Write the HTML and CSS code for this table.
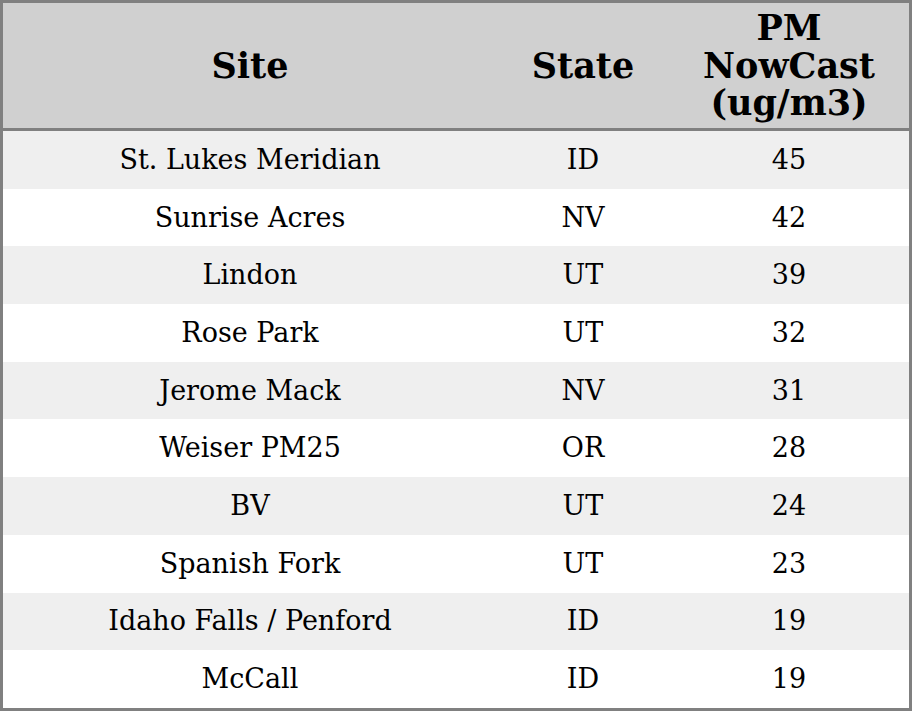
FILE: index.html
```html
<!DOCTYPE html>
<html>
<head>
<meta charset="utf-8">
<link rel="stylesheet" href="styles.css">
</head>
<body>
<table class="aq-table">
  <colgroup>
    <col class="col-site">
    <col class="col-state">
    <col class="col-pm">
  </colgroup>
  <thead>
    <tr><th>Site</th><th>State</th><th>PM<br>NowCast<br>(ug/m3)</th></tr>
  </thead>
  <tbody>
    <tr><td>St. Lukes Meridian</td><td>ID</td><td>45</td></tr>
    <tr><td>Sunrise Acres</td><td>NV</td><td>42</td></tr>
    <tr><td>Lindon</td><td>UT</td><td>39</td></tr>
    <tr><td>Rose Park</td><td>UT</td><td>32</td></tr>
    <tr><td>Jerome Mack</td><td>NV</td><td>31</td></tr>
    <tr><td>Weiser PM25</td><td>OR</td><td>28</td></tr>
    <tr><td>BV</td><td>UT</td><td>24</td></tr>
    <tr><td>Spanish Fork</td><td>UT</td><td>23</td></tr>
    <tr><td>Idaho Falls / Penford</td><td>ID</td><td>19</td></tr>
    <tr><td>McCall</td><td>ID</td><td>19</td></tr>
  </tbody>
</table>
</body>
</html>
```
FILE: styles.css
```css
html, body {
  margin: 0;
  padding: 0;
  background: #ffffff;
}
.aq-table {
  width: 912px;
  border-collapse: separate;
  border-spacing: 0;
  border: 3px solid #808080;
  table-layout: fixed;
  font-family: "DejaVu Serif", serif;
  color: #000;
}
.col-site { width: 494px; }
.col-state { width: 172px; }
.col-pm { width: 240px; }
.aq-table th {
  background: #d0d0d0;
  font-size: 35px;
  font-weight: bold;
  line-height: 37.5px;
  height: 125px;
  padding: 0;
  text-align: center;
  vertical-align: middle;
  border-bottom: 3px solid #808080;
}
.aq-table td {
  font-size: 27px;
  height: 57.7px;
  padding: 0;
  text-align: center;
  vertical-align: middle;
  line-height: 30px;
}
.aq-table tbody tr:nth-child(odd) td { background: #efefef; }
.aq-table tbody tr:nth-child(even) td { background: #ffffff; }
```
